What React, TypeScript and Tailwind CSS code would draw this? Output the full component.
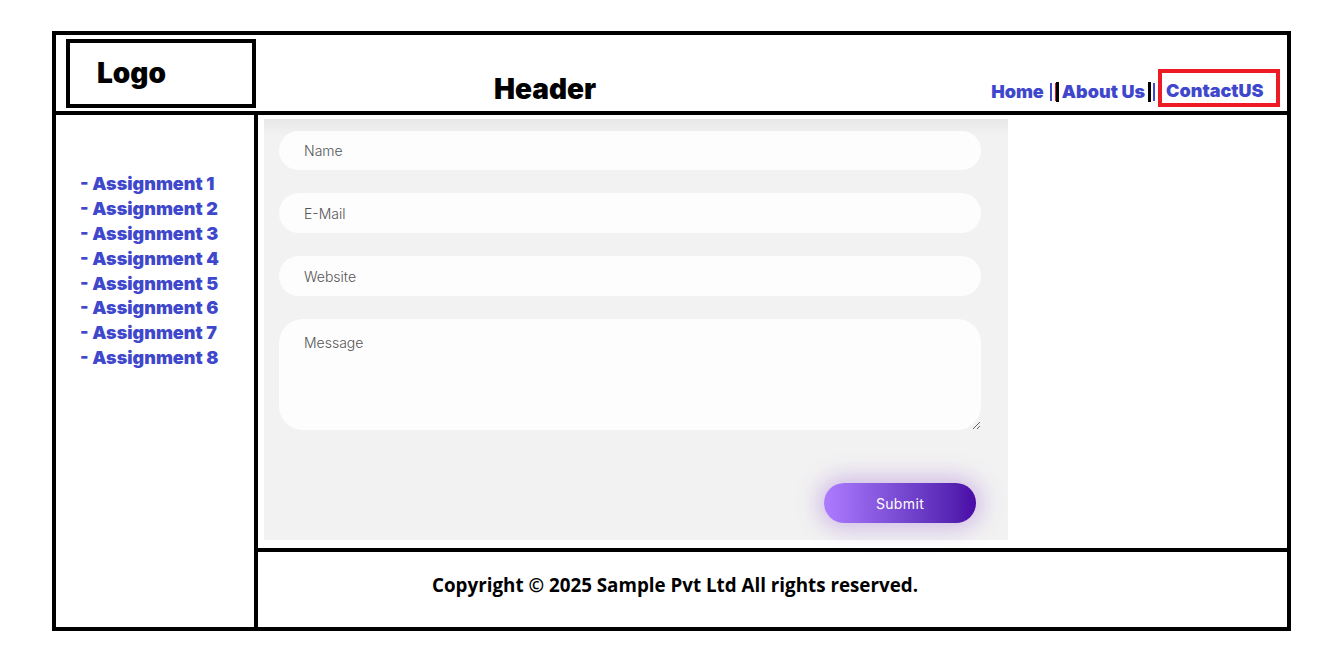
import React from 'react';

const assignments = [1, 2, 3, 4, 5, 6, 7, 8];

export default function App() {
  return (
    <div className="min-h-screen w-full bg-white pt-[31px] pl-[52px]" style={{ fontFamily: 'Inter, sans-serif' }}>
      <div className="w-[1239px] h-[600px] border-4 border-black flex flex-col">
        {/* Header */}
        <div className="h-[80px] border-b-4 border-black flex items-start">
          <div className="ml-[10px] mt-[4px] w-[190px] h-[69px] border-4 border-black flex items-center pl-[27px]">
            <span className="text-[28px] font-black text-black leading-none -mt-[2px]">Logo</span>
          </div>
          <div className="ml-[238px] mt-[40px] text-[28px] font-black text-black leading-none">Header</div>
          <nav className="ml-auto mr-[7px] mt-[34px] flex items-center text-[18px] font-black text-[#3f48cc] leading-none">
            <a className="mr-[6px] pt-[8px]">Home</a>
            <span className="flex items-center h-[20px] mt-[8px]">
              <span className="w-[2px] h-[18px] bg-[#3f48cc]" />
              <span className="w-[1px] h-[18px] ml-[3px] bg-[#ed1c24]" />
              <span className="w-[3px] h-[20px] bg-black" />
            </span>
            <a className="ml-[3px] pt-[8px]">About Us</a>
            <span className="flex items-center h-[20px] ml-[3px] mt-[8px]">
              <span className="w-[3px] h-[20px] bg-black" />
              <span className="w-[2px] h-[18px] ml-[2px] bg-[#3f48cc]" />
            </span>
            <a className="ml-[3px] w-[122px] h-[38px] border-4 border-[#ed1c24] flex items-center pl-[4px] pt-[6px]">ContactUS</a>
          </nav>
        </div>

        {/* Body */}
        <div className="flex flex-1">
          <aside className="w-[202px] border-r-4 border-black pl-[24px] pt-[57px]">
            <ul className="flex flex-col">
              {assignments.map((n) => (
                <li key={n} className="h-[24.8px] flex items-center text-[18px] font-black text-[#3f48cc] leading-none">
                  - Assignment {n}
                </li>
              ))}
            </ul>
          </aside>

          <div className="flex-1 flex flex-col">
            <main className="h-[433px] pl-[6px] pt-[4px]">
              <form className="w-[744px] h-[421px] bg-[#f2f2f2] bg-gradient-to-b from-[#e8e8e8] via-[#f2f2f2] via-[4%] to-[#f2f2f2] pl-[15px] pr-[27px] pt-[12px] flex flex-col">
                <input
                  placeholder="Name"
                  className="h-[39px] rounded-full bg-[#fdfdfd] pl-[25px] text-[14px] font-light text-[#444] placeholder:text-[#555] outline-none"
                />
                <input
                  placeholder="E-Mail"
                  className="mt-[23px] h-[40px] rounded-full bg-[#fdfdfd] pl-[25px] text-[14px] font-light text-[#444] placeholder:text-[#555] outline-none"
                />
                <input
                  placeholder="Website"
                  className="mt-[23px] h-[40px] rounded-full bg-[#fdfdfd] pl-[25px] text-[14px] font-light text-[#444] placeholder:text-[#555] outline-none"
                />
                <textarea
                  placeholder="Message"
                  className="mt-[23px] h-[111px] rounded-[24px] bg-[#fdfdfd] pl-[25px] pt-[13px] text-[14px] font-light text-[#444] placeholder:text-[#555] outline-none"
                />
                <div className="flex justify-end mt-[53px] pr-[5px]">
                  <button
                    type="button"
                    className="w-[152px] h-[40px] rounded-full bg-gradient-to-r from-[#ad7bff] to-[#4a08a6] text-white text-[14px] tracking-wide shadow-[0_0_22px_6px_rgba(150,90,210,0.35)]"
                  >
                    Submit
                  </button>
                </div>
              </form>
            </main>

            <footer className="flex-1 border-t-4 border-black -mr-[4px] flex items-center pl-[174px] pb-[8px]">
              <p className="text-[18.8px] font-bold text-black" style={{ fontFamily: '"Open Sans", sans-serif' }}>
                Copyright © 2025 Sample Pvt Ltd All rights reserved.
              </p>
            </footer>
          </div>
        </div>
      </div>
    </div>
  );
}
